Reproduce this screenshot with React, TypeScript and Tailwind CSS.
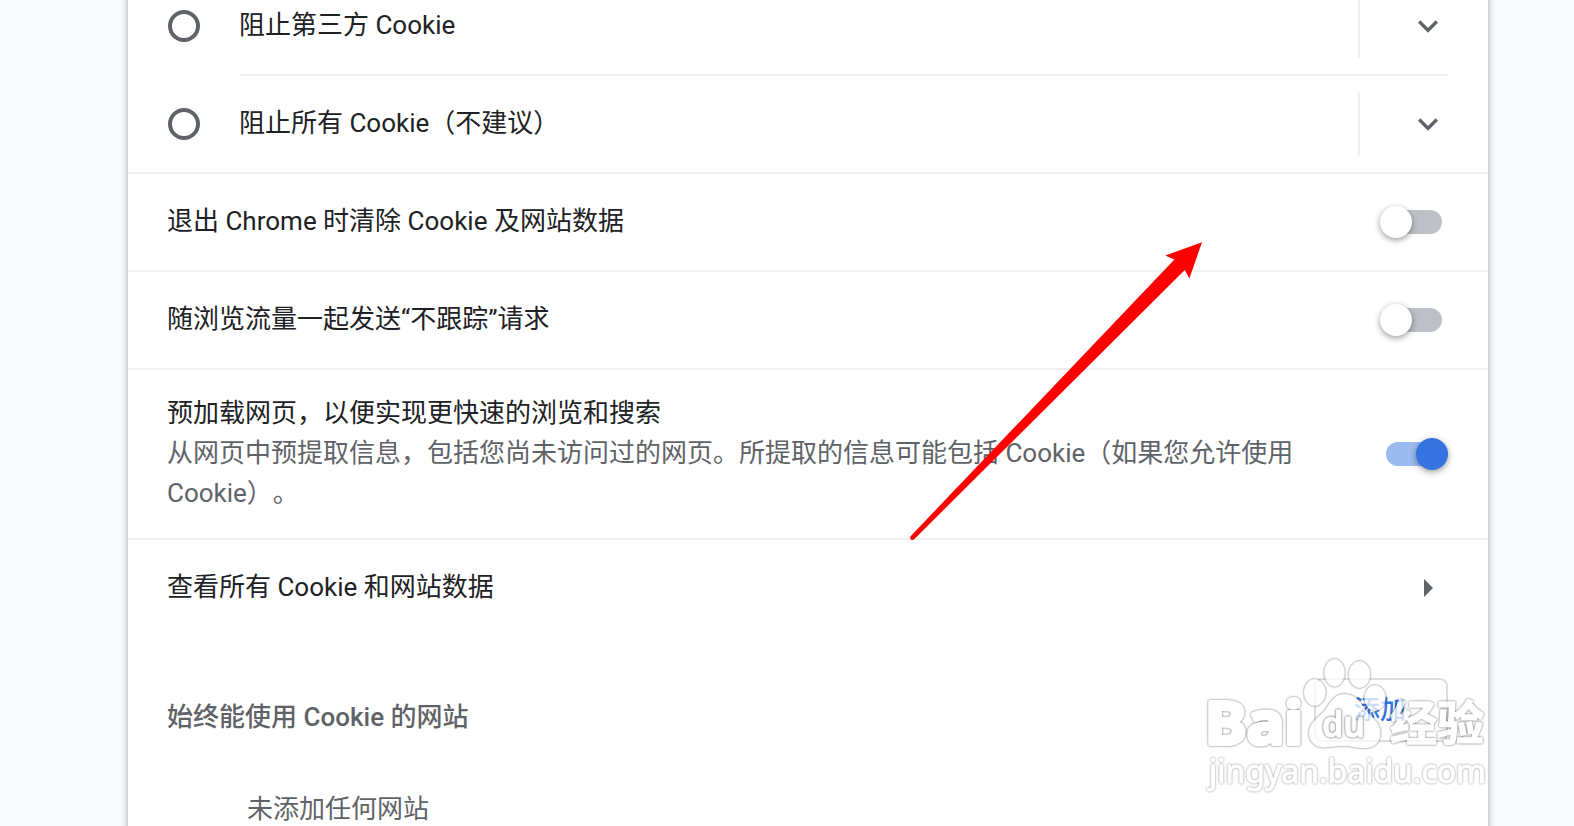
import type { ReactNode } from "react"
import clsx from "clsx"

const cookieOptions = [
  { id: "third-party", label: "阻止第三方 Cookie" },
  { id: "all", label: "阻止所有 Cookie（不建议）" },
]

const toggleRows = [
  { id: "clear-on-exit", label: "退出 Chrome 时清除 Cookie 及网站数据", checked: false },
  { id: "do-not-track", label: "随浏览流量一起发送“不跟踪”请求", checked: false },
  {
    id: "preload",
    label: "预加载网页，以便实现更快速的浏览和搜索",
    description: "从网页中预提取信息，包括您尚未访问过的网页。所提取的信息可能包括 Cookie（如果您允许使用 Cookie）。",
    checked: true,
  },
]

function ExpandIcon() {
  return (
    <svg viewBox="0 0 24 24" className="h-10 w-10 fill-[#5f6368]">
      <path d="M16.59 8.59L12 13.17 7.41 8.59 6 10l6 6 6-6z" />
    </svg>
  )
}

function Toggle({ checked }: { checked: boolean }) {
  return (
    <button
      role="switch"
      aria-checked={checked}
      className="relative flex h-8 w-[68px] shrink-0 items-center justify-center"
    >
      <span className={clsx("h-6 w-14 rounded-full", checked ? "bg-[#9abaf0]" : "bg-[#bdc1c6]")} />
      <span
        className={clsx(
          "absolute top-0 h-8 w-8 rounded-full shadow-[0_2px_6px_rgba(0,0,0,0.4)]",
          checked ? "right-0 bg-[#3574e0]" : "left-0 bg-white",
        )}
      />
    </button>
  )
}

function Row({ children }: { children: ReactNode }) {
  return (
    <div className="flex min-h-[98px] items-center justify-between border-b-2 border-[#efefef] pr-10 pl-[39px]">
      {children}
    </div>
  )
}

function Arrow() {
  return (
    <svg viewBox="0 0 300 304" className="absolute top-[238px] left-[906px] h-[304px] w-[300px]">
      <path d="M296 4.2 259.3 17.6 268.4 21.5 4.6 298.2Q3.6 300.4 5 301.4Q6.6 302.6 8.2 301.2L278.8 32 283.4 40.4Z" fill="#ff0000" />
    </svg>
  )
}

function Watermark() {
  return (
    <svg
      viewBox="1190 640 300 160"
      className="absolute top-[640px] left-[1190px] h-[160px] w-[300px] overflow-hidden opacity-75"
      fill="#ffffff"
      stroke="#ffffff"
      strokeWidth="1"
      strokeLinejoin="round"
    >
      <g className="drop-shadow-[0_0_1px_rgba(0,0,0,0.8)]">
        <ellipse cx="1334.5" cy="672.8" rx="9.8" ry="13.4" />
        <ellipse cx="1359.5" cy="674.5" rx="10.3" ry="13" />
        <ellipse cx="1314.8" cy="692.5" rx="10.4" ry="13" />
        <ellipse cx="1375" cy="698" rx="10.2" ry="12.4" />
        <path d="M1344 694.500C1333 694.500 1330 705 1323 713C1315 720 1309 725 1309.500 734C1310 743 1317 747.500 1325 747C1332 746.500 1337 745.500 1344 745.500C1352 745.500 1357 748 1366 747.500C1375 747 1380 742 1380 733C1380 723 1372 718 1366 711C1360 703 1356 694.500 1344 694.500Z" />
      </g>
      <text
        x="1322"
        y="737"
        fontSize="36"
        textLength="43"
        lengthAdjust="spacingAndGlyphs"
        className="font-['Noto_Sans'] font-semibold drop-shadow-[0_0_1.2px_rgba(0,0,0,1)]"
      >
        du
      </text>
      <text
        x="1205"
        y="744"
        fontSize="60"
        textLength="98"
        lengthAdjust="spacingAndGlyphs"
        strokeWidth="4"
        className="font-['Noto_Sans'] font-bold drop-shadow-[0_0_1px_rgba(0,0,0,0.8)]"
      >
        Bai
      </text>
      <text
        x="1390"
        y="740"
        fontSize="47"
        textLength="94"
        strokeWidth="1.5"
        className="font-['Noto_Sans_CJK_SC'] font-bold drop-shadow-[0_0_1px_rgba(0,0,0,0.8)]"
      >
        经验
      </text>
      <text
        x="1209"
        y="782.500"
        fontSize="33"
        textLength="277"
        lengthAdjust="spacingAndGlyphs"
        className="font-['Noto_Sans'] font-normal drop-shadow-[0_0_1px_rgba(0,0,0,0.6)]"
      >
        jingyan.baidu.com
      </text>
    </svg>
  )
}

export default function App() {
  return (
    <main
      lang="zh-CN"
      className="relative h-[826px] overflow-hidden bg-[#f8f9fa] font-[Roboto,'Noto_Sans_CJK_SC',sans-serif] text-[26px] leading-10 text-[#202124] [text-spacing-trim:space-all]"
    >
      <div className="-mt-6 ml-32 h-[900px] w-[1360px] bg-white shadow-[0_2px_4px_rgba(60,64,67,0.3),0_2px_6px_2px_rgba(60,64,67,0.15)]">
        {/* Cookie policy radios */}
        <div className="border-b-2 border-[#efefef] pt-0.5">
          {cookieOptions.map((option, index) => (
            <div
              key={option.id}
              className={clsx(
                "mr-10 ml-28 flex items-center justify-between",
                index === 0 ? "h-[98px] border-b-2 border-[#efefef]" : "h-24",
              )}
            >
              <div className="-ml-[72px] flex items-center gap-[39px]">
                <span className="h-8 w-8 rounded-full border-4 border-[#5f6368]" />
                <span className="-mt-0.5">{option.label}</span>
              </div>
              <div className="flex h-16 w-[90px] items-center justify-end border-l-2 border-[#efefef]">
                <ExpandIcon />
              </div>
            </div>
          ))}
        </div>

        {/* Toggles */}
        {toggleRows.map((row) => (
          <Row key={row.id}>
            <div className={clsx("mr-20 w-[1132px]", row.description ? "pt-[23px] pb-[25px]" : "-mt-0.5")}>
              <p>{row.label}</p>
              {row.description && <p className="text-[#5f6368]">{row.description}</p>}
            </div>
            <Toggle checked={row.checked} />
          </Row>
        ))}

        <div className="flex h-24 items-center justify-between pr-[55px] pl-[39px]">
          <span className="-mt-0.5">查看所有 Cookie 和网站数据</span>
          <svg viewBox="0 0 9 18" className="h-[18px] w-[9px] fill-[#5f6368]">
            <path d="M0 0l9 9-9 9z" />
          </svg>
        </div>

        {/* Allowed sites */}
        <div className="flex items-start justify-between pt-[42px] pr-10 pl-[39px] font-medium">
          <h2 className="pt-[19px] text-[#5f6368]">始终能使用 Cookie 的网站</h2>
          <button className="h-16 w-[134px] rounded-lg border-2 border-[#dadce0] pr-0.5 text-[#3574e0]">添加</button>
        </div>
        <p className="pt-[47px] pl-[119px] text-[#5f6368]">未添加任何网站</p>
      </div>

      <Arrow />
      <Watermark />
    </main>
  )
}
